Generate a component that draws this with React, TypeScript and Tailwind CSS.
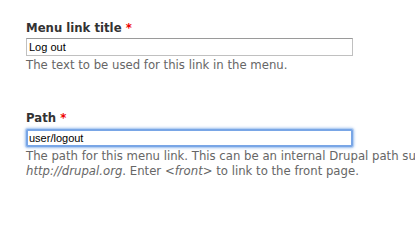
import React from "react";

const font = { fontFamily: '"DejaVu Sans", "Lucida Grande", Verdana, sans-serif' };

export default function App() {
  return (
    <div className="w-[415px] h-[213px] overflow-hidden bg-white">
      <div
        className="w-[720px] pl-[26px] pt-[21px] text-[11.7px] text-[#666]"
        style={font}
      >
        {/* menu link title */}
        <label className="block font-bold leading-[14px] text-[#333]">
          Menu link title <span className="text-[#e00]">*</span>
        </label>
        <input
          type="text"
          defaultValue="Log out"
          className="mt-[3px] block h-[18px] w-[327px] border border-[#c0c0c0] border-t-[#9a9a9a] bg-white px-[2px] text-[11px] text-black outline-none font-['Liberation_Sans',Arial,sans-serif]"
        />
        <div className="mt-[2px] leading-[15px]">
          The text to be used for this link in the menu.
        </div>

        {/* path */}
        <label className="mt-[38px] block font-bold leading-[14px] text-[#333]">
          Path <span className="text-[#e00]">*</span>
        </label>
        <input
          type="text"
          defaultValue="user/logout"
          className="mt-[4px] block h-[18px] w-[327px] rounded-[2px] border-2 border-[#79a6e6] bg-white px-[1px] text-[11px] text-black outline-none shadow-[0_0_0_1px_#b5d0f3,0_0_3px_1px_#a3c2ee] font-['Liberation_Sans',Arial,sans-serif]"
        />
        <div className="mt-[2px] w-[680px] leading-[15px]">
          The path for this menu link. This can be an internal Drupal path such
          as <em>node/add</em> or an external URL such as
          <br />
          <em>http://drupal.org</em>. Enter <em>&lt;front&gt;</em> to link to
          the front page.
        </div>
      </div>
    </div>
  );
}
